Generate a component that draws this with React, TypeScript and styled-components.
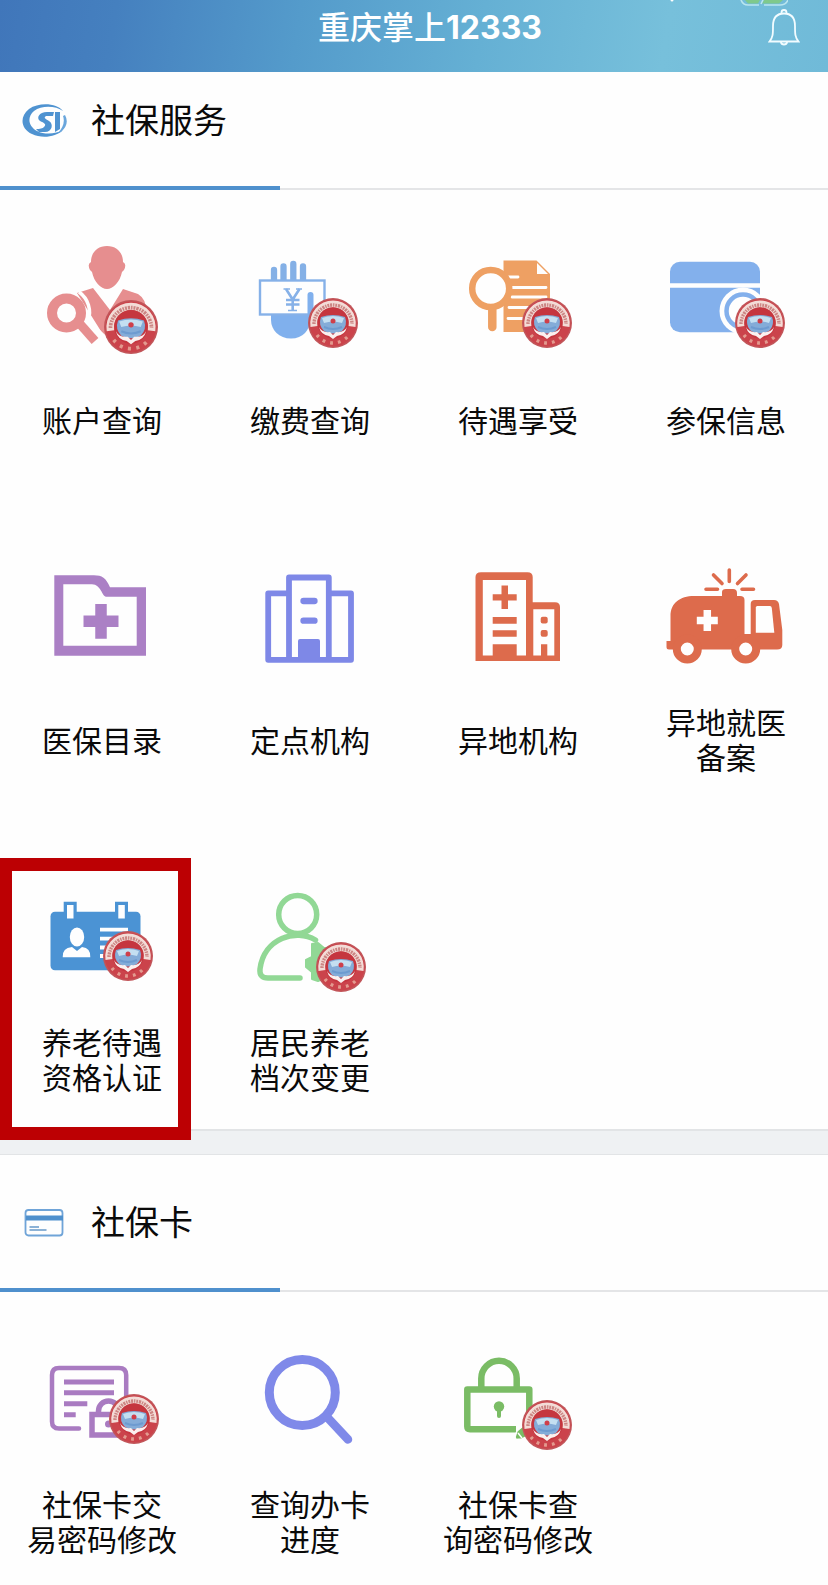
import React from "react";
import styled, { createGlobalStyle } from "styled-components";

const GlobalStyle = createGlobalStyle`
  *, *::before, *::after { box-sizing: border-box; }
  body {
    margin: 0;
    background: #fefefe;
    color: #0a0a0a;
    font-family: Inter, "Noto Sans CJK SC", sans-serif;
  }
`;

const Page = styled.div`
  width: 100%;
  overflow: hidden;
`;

const TopBar = styled.header`
  position: relative;
  display: flex;
  align-items: center;
  height: 72px;
  padding: 0 28px 16px 92px;
  background: linear-gradient(99deg, #4076ba 0%, #4580bf 14%, #549bcb 36%, #65b0d4 58%, #77c0db 80%, #70bad8 100%);
`;

const AppTitle = styled.h1`
  flex: 1;
  margin: 0;
  color: #fff;
  font-size: 32px;
  font-weight: 500;
  line-height: 40px;
  text-align: center;
`;

const Hotline = styled.span`
  font-weight: 700;
`;

const BellButton = styled.button`
  display: flex;
  padding: 0;
  border: 0;
  background: none;
  cursor: pointer;
`;

const Battery = styled.svg`
  position: absolute;
  top: 0;
  right: 40px;
`;

const SectionHeader = styled.div<{ $tall?: boolean }>`
  display: flex;
  align-items: center;
  gap: 23px;
  padding: ${(p) => (p.$tall ? "43px" : "24px")} 22px 42px;
  border-bottom: 2px solid #e4e5e7;
  position: relative;

  &::after {
    content: "";
    position: absolute;
    left: 0;
    bottom: -2px;
    width: 280px;
    height: 4px;
    background: #4f90cd;
  }
`;

const SectionTitle = styled.h2`
  margin: 0;
  font-size: 34px;
  font-weight: 400;
  line-height: 50px;
`;

const Grid = styled.div<{ $end: number }>`
  display: grid;
  grid-template-columns: repeat(4, 1fr);
  row-gap: 47px;
  margin: 0 -2px;
  padding-bottom: ${(p) => p.$end}px;
`;

const Tile = styled.button`
  position: relative;
  display: flex;
  flex-direction: column;
  align-items: center;
  gap: 9px;
  padding: 40px 0 0;
  border: 0;
  background: none;
  color: inherit;
  font: inherit;
  cursor: pointer;
`;

const TileLabel = styled.span`
  display: flex;
  align-items: center;
  height: 84px;
  font-size: 30px;
  line-height: 35px;
  text-align: center;
  white-space: pre-line;
`;

const Highlight = styled.span`
  position: absolute;
  z-index: 1;
  top: 28px;
  bottom: -37px;
  left: 2px;
  width: 191px;
  border: 13px solid #bc0003;
  border-left-width: 12px;
  pointer-events: none;
`;

const Band = styled.div`
  height: 26px;
  border-top: 2px solid #e2e4e6;
  border-bottom: 1px solid #e2e4e6;
  background: #eff1f3;
`;

const Seal = ({ x, y, r = 25 }: { x: number; y: number; r?: number }) => (
  <g transform={`translate(${x} ${y}) scale(${r / 25})`}>
    <circle r="25" fill="#c2565a" />
    <circle r="23.500" fill="#cb434b" />
    <path d="M-22.500 4A22.800 22.800 0 1 1 22.500 4L15.500 3A15.800 15.800 0 1 0-15.500 3Z" fill="#f3dcd7" />
    <path d="M-19 1A19 19 0 1 1 19 1" fill="none" stroke="#cc8583" strokeWidth="3.400" strokeDasharray="1.800 .8 2.200 .9 1.400 .9" />
    <circle r="15.500" fill="#c5363f" />
    <path d="M-12-6Q0-10 12-6Q15 2 9 8Q0 13-9 8Q-15 2-12-6Z" fill="#84acd8" />
    <path d="M-11-5Q0-9 11-5L9 0Q0-3-9 0Z" fill="#c4dff1" />
    <path d="M-9 4Q0 8 9 4" fill="none" stroke="#6d9bd0" strokeWidth="2" />
    <path d="M-14 4Q-11 10-3 9L0 12 3 9Q11 10 14 4Q12 12 4 13L0 16-4 13Q-12 12-14 4Z" fill="#fbf0ef" />
    <circle cy="-2" r="2.500" fill="#cf3f4a" />
    <path d="M-16 12A20 20 0 0 0 16 12" fill="none" stroke="#e39a8f" strokeWidth="3.400" strokeDasharray="2.800 5" />
  </g>
);

const AccountIcon = () => (
  <>
    <path d="M85 16C95 16 101 23 101 32Q105 34 102 40L100 42C98 52 91 59 85 59S72 52 70 42L68 40Q65 34 69 32C69 23 75 16 85 16Z" fill="#e68e8f" />
    <path d="M55 63L71 58 88 80 101 59 116 64Q124 69 124 80L126 105Q104 112 82 106Z" fill="#e68e8f" />
    <path d="M57 62A25 25 0 0 1 66 91L86 110" fill="none" stroke="#fefefe" strokeWidth="3.500" />
    <circle cx="44.500" cy="83" r="14.500" fill="#fefefe" stroke="#e68e8f" strokeWidth="10" />
    <path d="M58 94L73 111" stroke="#e68e8f" strokeWidth="9" />
    <Seal x={109} y={97} r={27} />
  </>
);

const PaymentIcon = () => (
  <>
    <path d="M44 50V40M53.500 50V36.500M63.300 50V34M73 50V36.500" stroke="#84b0e6" strokeWidth="6.300" strokeLinecap="round" />
    <path d="M41 84H80V90C80 100 73 108.600 61 108.600S41 100 41 90Z" fill="#80b0ed" />
    <rect x="30" y="50.500" width="64.500" height="34" fill="#fefefe" stroke="#86b1e8" strokeWidth="2.400" />
    <path d="M80.500 84V65" stroke="#80b0ed" strokeWidth="6" strokeLinecap="round" />
    <path d="M56 59L62.700 69.500 69.500 59M62.700 69V80.500M56 70H69.500M56 74.500H69.500" fill="none" stroke="#86b1e8" strokeWidth="2.600" />
    <path d="M53.500 59H60M66 59H72M58 80.500H67" stroke="#86b1e8" strokeWidth="1.500" />
    <Seal x={103} y={93} />
  </>
);

const BenefitIcon = () => (
  <>
    <path d="M65.500 30.500H98.500L112 44V102H65.500Z" fill="#eea063" />
    <path d="M99 33V44H110Z" fill="#fefefe" />
    <path d="M71 47H80M74 57.500H108M74 67H108M71 77.500H108M70 88.500H100" stroke="#fefefe" strokeWidth="2.800" strokeLinecap="round" />
    <circle cx="52.700" cy="58.500" r="18.500" fill="#fefefe" stroke="#eea063" strokeWidth="6.500" />
    <path d="M54.300 80V97" stroke="#eea063" strokeWidth="8.500" strokeLinecap="round" />
    <Seal x={109} y={93} />
  </>
);

const InsuredIcon = () => (
  <>
    <rect x="24" y="31.700" width="90" height="70.600" rx="10" fill="#83b0ec" />
    <path d="M24 55.500H114" stroke="#fefefe" strokeWidth="4.400" />
    <circle cx="97" cy="81" r="23.500" fill="#fefefe" />
    <circle cx="97" cy="81" r="16.500" fill="none" stroke="#83b0ec" strokeWidth="4.500" />
    <Seal x={114} y={93} />
  </>
);

const FolderIcon = () => (
  <>
    <path fillRule="evenodd" d="M32.300 25.300H72C80 25.300 84 28 88 37.300H124V105.700H32.300ZM41.300 34.300V95.700H114.700V46.700H84C80 46.700 79 34.300 70 34.300Z" fill="#ab80c5" />
    <path d="M79 54V88.700M61.500 71.300H96.500" stroke="#ab80c5" strokeWidth="11.500" />
  </>
);

const BuildingIcon = () => (
  <g fill="none" stroke="#7e88e7" strokeWidth="5.800" strokeLinejoin="round">
    <path d="M58 43.300H38.200V109.800H121V43.300H100M59 109V27.500H98.800V109" />
    <path d="M73.500 51H84.500M73.500 70.700H84.500" strokeWidth="6.300" strokeLinecap="round" />
    <path d="M70 91H88V108H70Z" fill="#7e88e7" strokeWidth="4" />
  </g>
);

const HospitalIcon = () => (
  <g fill="#dd6b4c">
    <path fillRule="evenodd" d="M37.500 111V27Q37.500 22.300 43 22.300H89.500Q94.700 22.300 94.700 27V52.300H117Q122 52.300 122 57V111ZM44.800 30V105.500H54.700V94.300H78.700V105.500H88V30ZM95.300 59.300V105.500H103V94.300H109.300V105.500H116.300V59.300Z" />
    <path d="M63.500 35.500H70V44.200H78.700V50.500H70V59H63.500V50.500H54.700V44.200H63.500ZM54.700 67H78.700V73.700H54.700ZM54.700 80.300H78.700V86.700H54.700Z" />
    <rect x="102.700" y="66.700" width="7" height="6.800" rx="2" />
    <rect x="102.700" y="80" width="7" height="6.800" rx="2" />
  </g>
);

const AmbulanceIcon = () => (
  <>
    <path d="M83.300 20V31.500M67.500 25L76 33.500M100 25L91.500 33.500M60 39.300H71.500M96 39.300H107.500" stroke="#dd6b4c" strokeWidth="3.600" strokeLinecap="round" />
    <path d="M24.500 66C24.500 53 34 46 48 46H76V42Q76 39 80 39H87Q91 39 91 43V46H94Q98.500 46 98.500 50V84H104.700V54Q104.700 50 109 50H128Q132 50 133 54L136.300 80V95Q136.300 99.500 131 99.500H23Q20.500 99.500 20.500 97V91H24.500Z" fill="#dd6b4c" />
    <path d="M111 56H124Q125.500 56 125.800 58L128.300 82.700H109.800V57Z" fill="#fefefe" />
    <path d="M61.300 60V81M50.800 70.500H71.800" stroke="#fefefe" strokeWidth="7.500" />
    <circle cx="41.300" cy="99" r="10.500" fill="#fefefe" stroke="#dd6b4c" strokeWidth="8" />
    <circle cx="99.700" cy="99" r="10.500" fill="#fefefe" stroke="#dd6b4c" strokeWidth="8" />
  </>
);

const BadgeCardIcon = () => (
  <>
    <rect x="28.500" y="41.700" width="90" height="58.500" rx="4.500" fill="#4b93d4" />
    <path d="M41.700 31.700H54.700V45H41.700ZM93 31.700H106V45H93Z" fill="#4b93d4" />
    <path d="M45 35H51.500V48.500H45ZM96.300 35H102.800V48.500H96.300Z" fill="#fefefe" />
    <ellipse cx="55" cy="67" rx="7.200" ry="9.500" fill="#fefefe" />
    <path d="M40.700 87.300Q40 78 50 77L55 81 60 77Q69 78 68.300 87.300Z" fill="#fefefe" />
    <path d="M78 59.700H106M78 68.700H106M78 77.500H100M78 86H100" stroke="#fefefe" strokeWidth="3.800" />
    <Seal x={106} y={86} />
  </>
);

const ResidentIcon = () => (
  <>
    <circle cx="67.700" cy="44.500" r="19" fill="none" stroke="#91d895" strokeWidth="5.500" />
    <path d="M85.500 70C66 58.500 34 68 30 99Q29 108 38 108H70" fill="none" stroke="#91d895" strokeWidth="5.500" strokeLinecap="round" />
    <path d="M82 80V74L88 73 94 78H111V108H94L88 111 82 109V102L76 97V90L82 87Z" fill="#91d895" stroke="#91d895" strokeWidth="2" strokeLinejoin="round" />
    <Seal x={111} y={97} />
  </>
);

const TradePasswordIcon = () => (
  <>
    <g fill="none" stroke="#a97bc1">
      <path d="M57 96.500H37Q30 96.500 30 89.500V43Q30 36 37 36H97Q104.200 36 104.200 43V70" strokeWidth="4.500" strokeLinecap="round" />
      <path d="M42 50H92M42 60.700H92M42 71.700H65.300M42 82.700H53.700" strokeWidth="5" />
      <path d="M70 82.500H106V103H70ZM76.500 82V79A10 10 0 0 1 96.500 79V82" strokeWidth="5.500" />
    </g>
    <circle cx="86.500" cy="92" r="3.500" fill="#a97bc1" />
    <Seal x={112} y={87} />
  </>
);

const SearchIcon = () => (
  <>
    <circle cx="72.300" cy="60.500" r="33" fill="none" stroke="#7f89e9" strokeWidth="9" />
    <path d="M97 85L118 107.500" stroke="#7f89e9" strokeWidth="8.500" strokeLinecap="round" />
  </>
);

const QueryPasswordIcon = () => (
  <>
    <path d="M78 97.200H32Q29.300 97.200 29.300 94.500V57.500H91.300V84M43.300 57V46.500A17.700 17.700 0 0 1 78.700 46.500V57" fill="none" stroke="#7abc65" strokeWidth="6.500" strokeLinejoin="round" />
    <circle cx="61" cy="74.500" r="5.200" fill="#7abc65" />
    <path d="M61 76V84" stroke="#7abc65" strokeWidth="4" strokeLinecap="round" />
    <path d="M77 105L79 99 85 94 92 103 84 107 78 107.500Z" fill="#7abc65" stroke="#fefefe" strokeWidth="1.500" />
    <path d="M80 101L84 106" stroke="#fefefe" strokeWidth="1.500" />
    <Seal x={109} y={93} />
  </>
);

type Service = { label: string; icon: React.FC; highlighted?: boolean };

const insuranceServices: Service[] = [
  { label: "账户查询", icon: AccountIcon },
  { label: "缴费查询", icon: PaymentIcon },
  { label: "待遇享受", icon: BenefitIcon },
  { label: "参保信息", icon: InsuredIcon },
  { label: "医保目录", icon: FolderIcon },
  { label: "定点机构", icon: BuildingIcon },
  { label: "异地机构", icon: HospitalIcon },
  { label: "异地就医\n备案", icon: AmbulanceIcon },
  { label: "养老待遇\n资格认证", icon: BadgeCardIcon, highlighted: true },
  { label: "居民养老\n档次变更", icon: ResidentIcon },
];

const cardServices: Service[] = [
  { label: "社保卡交\n易密码修改", icon: TradePasswordIcon },
  { label: "查询办卡\n进度", icon: SearchIcon },
  { label: "社保卡查\n询密码修改", icon: QueryPasswordIcon },
];

const ServiceGrid = ({ services, end }: { services: Service[]; end: number }) => (
  <Grid $end={end}>
    {services.map(({ label, icon: Icon, highlighted }) => (
      <Tile key={label} type="button">
        <svg width="160" height="140" viewBox="0 0 160 140" aria-hidden="true">
          <Icon />
        </svg>
        <TileLabel>{label}</TileLabel>
        {highlighted && <Highlight />}
      </Tile>
    ))}
  </Grid>
);

export default function App() {
  return (
    <Page>
      <GlobalStyle />
      <TopBar>
        <Battery width="120" height="8" viewBox="0 0 120 8" aria-hidden="true">
          <circle cx="4" cy="0" r="1.500" fill="#fff" />
          <path d="M77 0H92L90 3.500H80ZM96 0H115L111 3.500H94Z" fill="#7fc98c" />
          <path d="M73 0Q75 5 80 5H91M96 5H112Q118 5 120 0M95 0L93 4" fill="none" stroke="#b9e5ef" strokeWidth="1.600" />
        </Battery>
        <AppTitle>
          重庆掌上<Hotline>12333</Hotline>
        </AppTitle>
        <BellButton type="button" aria-label="消息">
          <svg width="32" height="38" viewBox="0 0 32 38" fill="none" stroke="#f2fcff" strokeWidth="1.800">
            <path d="M1.500 32.500C5 28 5 25 5 17C5 9 9 4.500 16 4.500S27 9 27 17C27 25 27 28 30.500 32.500Z" />
            <path d="M13.500 4.500V3.500A2.500 2.500 0 0 1 18.500 3.500V4.500M12.800 33A3.300 3.300 0 0 0 19.200 33" />
          </svg>
        </BellButton>
      </TopBar>

      <section>
        <SectionHeader>
          <svg width="46" height="34" viewBox="0 0 46 34" aria-hidden="true">
            <path d="M41 7C35-1 17-2 7 5C-3 13-1 25 10 30C20 35 34 33 41 26C34 30 23 31 15 27C6 22 5 13 12 7C20 1 34 2 41 7Z" fill="#4f93d1" />
            <path d="M43 11Q48 20 39 28L36 29Q44 20 41 12Z" fill="#6aa6dc" />
            <path d="M32 8H25C17 8 14 14 18 17C22 19 25 20 22 23Q20 25 14 25L17 28H23C30 28 32 20 27 17C24 15 21 14 24 12H31Z" fill="#4f93d1" />
            <path d="M33 8H38V25L33 28Z" fill="#4f93d1" />
          </svg>
          <SectionTitle>社保服务</SectionTitle>
        </SectionHeader>
        <ServiceGrid services={insuranceServices} end={26} />
      </section>

      <Band />

      <section>
        <SectionHeader $tall>
          <svg width="46" height="34" viewBox="0 0 46 34" aria-hidden="true">
            <rect x="3.500" y="4" width="37" height="25.500" rx="3" fill="#fefefe" stroke="#6fa4d8" strokeWidth="1.800" />
            <path d="M4 12H41" stroke="#4f90cd" strokeWidth="5" />
            <path d="M7.500 21H17M7.500 24H24.500" stroke="#6799c9" strokeWidth="1.600" />
          </svg>
          <SectionTitle>社保卡</SectionTitle>
        </SectionHeader>
        <ServiceGrid services={cardServices} end={20} />
      </section>
    </Page>
  );
}
